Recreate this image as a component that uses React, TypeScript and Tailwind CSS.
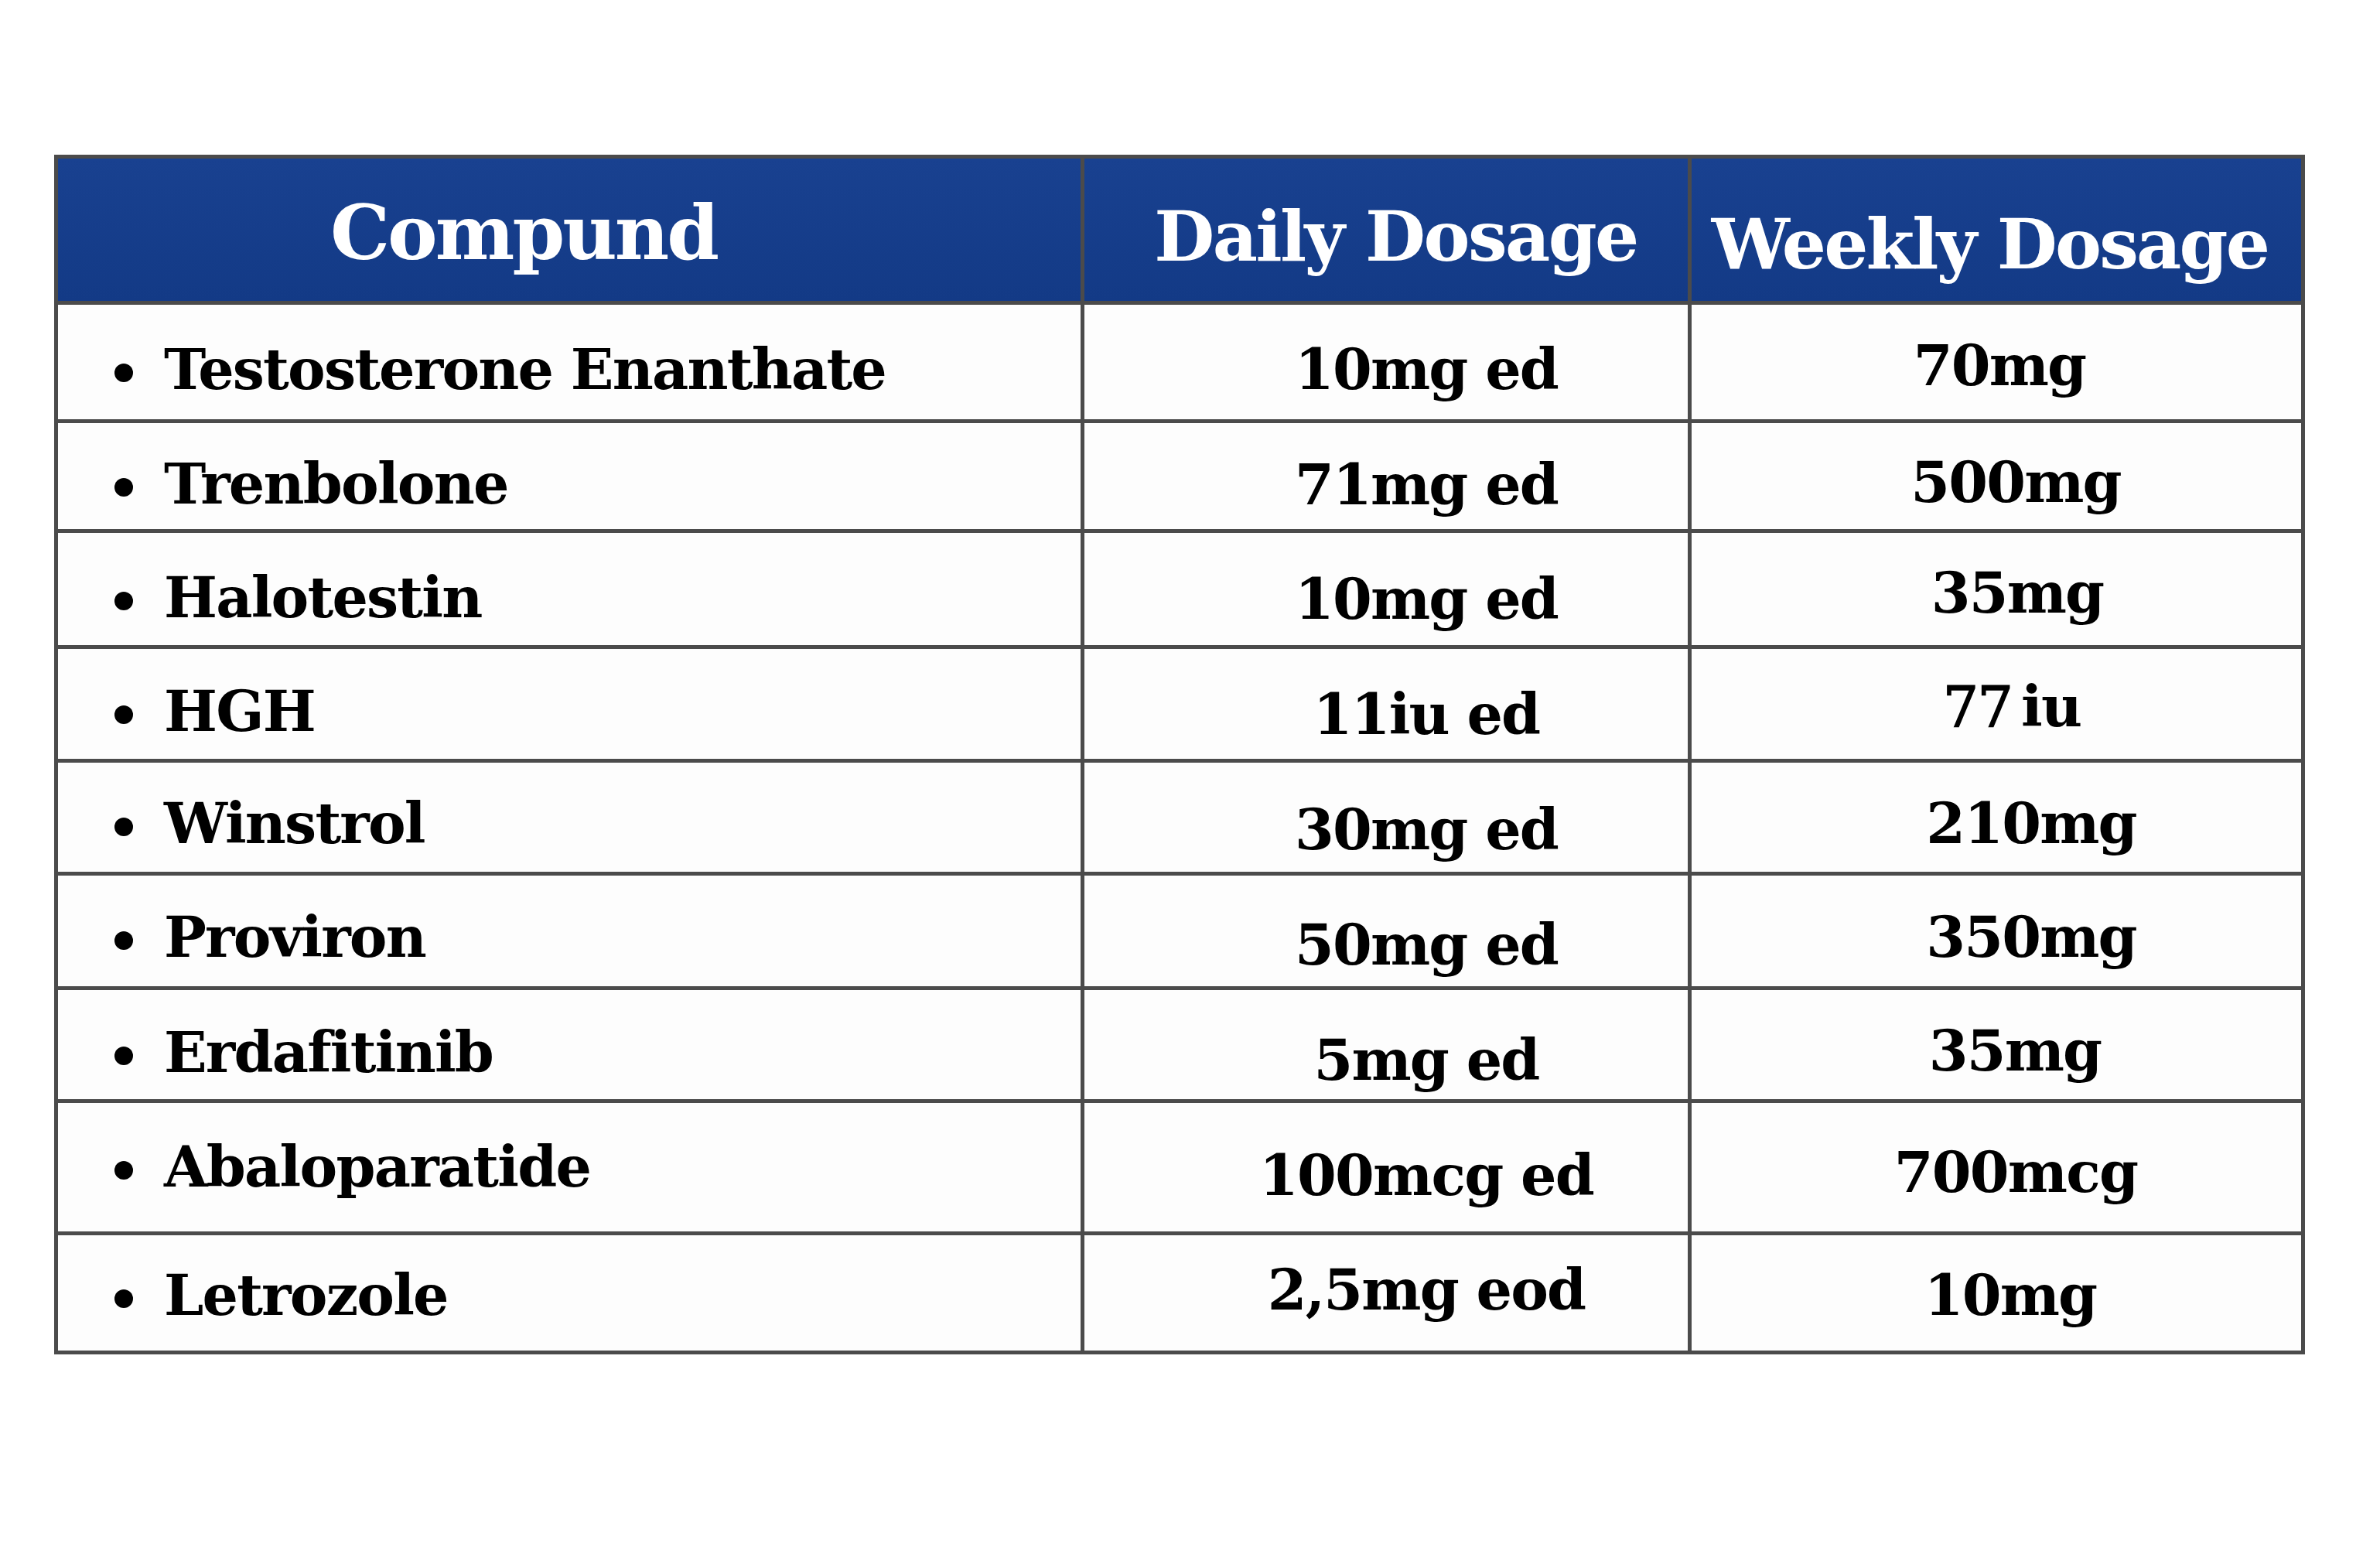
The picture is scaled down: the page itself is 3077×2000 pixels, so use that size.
import React from "react";

type Row = {
  name: string;
  h: string;
  c1: string;
  c2: string;
  c3: string;
  daily: string;
  weekly: React.ReactNode;
};

const rows: Row[] = [
  { name: "Testosterone Enanthate", h: "h-[153px]", c1: "pt-[47px]", c2: "pt-[47px]", c3: "pt-[42px] pl-[8px]", daily: "10mg ed", weekly: "70mg" },
  { name: "Trenbolone", h: "h-[142px]", c1: "pt-[42px]", c2: "pt-[43px]", c3: "pt-[40px] pl-[50px]", daily: "71mg ed", weekly: "500mg" },
  { name: "Halotestin", h: "h-[150px]", c1: "pt-[47px]", c2: "pt-[49px]", c3: "pt-[41px] pl-[54px]", daily: "10mg ed", weekly: "35mg" },
  {
    name: "HGH",
    h: "h-[147px]",
    c1: "pt-[44px]",
    c2: "pt-[48px]",
    c3: "pt-[38px] pl-[40px]",
    daily: "11iu ed",
    weekly: (
      <span>
        <span className="font-normal [-webkit-text-stroke:1.5px_black]">77</span>
        <span className="ml-[12px]">iu</span>
      </span>
    ),
  },
  { name: "Winstrol", h: "h-[146px]", c1: "pt-[42px]", c2: "pt-[50px]", c3: "pt-[42px] pl-[90px]", daily: "30mg ed", weekly: "210mg" },
  { name: "Proviron", h: "h-[148px]", c1: "pt-[43px]", c2: "pt-[53px]", c3: "pt-[43px] pl-[90px]", daily: "50mg ed", weekly: "350mg" },
  { name: "Erdafitinib", h: "h-[146px]", c1: "pt-[44px]", c2: "pt-[54px]", c3: "pt-[42px] pl-[48px]", daily: "5mg ed", weekly: "35mg" },
  { name: "Abaloparatide", h: "h-[171px]", c1: "pt-[46px]", c2: "pt-[57px]", c3: "pt-[53px] pl-[50px]", daily: "100mcg ed", weekly: "700mcg" },
  { name: "Letrozole", h: "h-[154px]", c1: "pt-[41px]", c2: "pt-[34px]", c3: "pt-[41px] pl-[36px]", daily: "2,5mg eod", weekly: "10mg" },
];

export default function App() {
  return (
    <div className="w-[3077px] h-[2000px] bg-white pt-[200px] pl-[70px] font-['DejaVu_Serif',serif]">
      <div className="w-[2910px] border-[5px] border-[#4b4b4b] bg-[#fdfdfd]">
        {/* Header */}
        <div className="grid grid-cols-[1322px_785px_793px] h-[184px] bg-gradient-to-b from-[#194190] to-[#133a86] text-white font-bold">
          <div className="flex justify-center items-start pt-[48px] pr-[118px] text-[97px] tracking-[-3px] leading-none">
            Compund
          </div>
          <div className="flex justify-center items-start pt-[55px] pl-[25px] text-[90px] tracking-[-2.6px] leading-none border-l-[5px] border-[#4b4b4b]">
            Daily Dosage
          </div>
          <div className="flex justify-center items-start pt-[65px] pr-[17px] text-[90px] tracking-[-2.8px] leading-none border-l-[5px] border-[#4b4b4b]">
            Weekly Dosage
          </div>
        </div>
        {/* Body */}
        {rows.map((r) => (
          <div
            key={r.name}
            className={`grid grid-cols-[1322px_785px_793px] border-t-[5px] border-[#4b4b4b] text-black font-bold text-[73px] tracking-[-1.8px] leading-none ${r.h}`}
          >
            <div className={`flex items-start pl-[73px] ${r.c1}`}>
              <span className="mt-[29px] mr-[40px] w-[24px] h-[24px] rounded-full bg-black shrink-0" />
              <span>{r.name}</span>
            </div>
            <div className={`flex justify-center items-start pl-[104px] border-l-[5px] border-[#4b4b4b] ${r.c2}`}>
              {r.daily}
            </div>
            <div className={`flex justify-center items-start border-l-[5px] border-[#4b4b4b] ${r.c3}`}>
              {r.weekly}
            </div>
          </div>
        ))}
      </div>
    </div>
  );
}
